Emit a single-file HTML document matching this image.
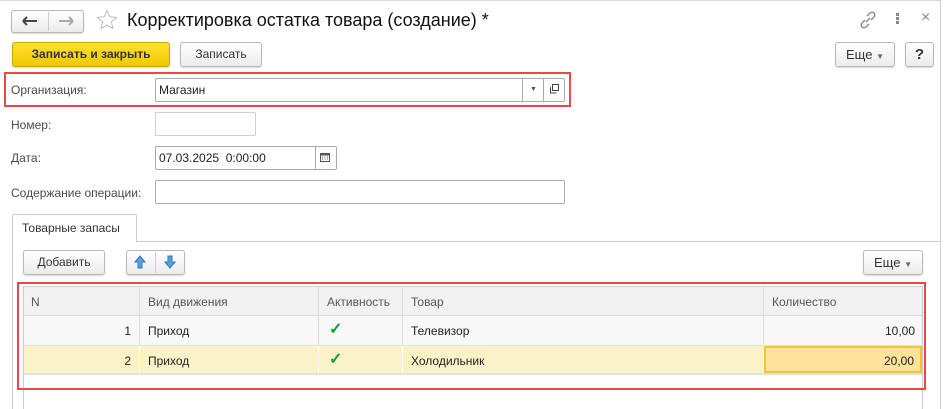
<!DOCTYPE html>
<html><head><meta charset="utf-8"><style>
*{box-sizing:border-box;margin:0;padding:0}
body{width:944px;height:409px;background:#fff;font-family:"Liberation Sans",sans-serif;font-size:12px;color:#333;position:relative;overflow:hidden}
.a{position:absolute}
.btn{position:absolute;border:1px solid #b8b8b8;border-radius:3px;background:linear-gradient(#fff,#ececec);box-shadow:0 1px 1px rgba(0,0,0,.15);text-align:center;color:#333;font-size:12px}
.inp{position:absolute;border:1px solid #a8a8a8;border-radius:2px;background:#fff}
.lbl{position:absolute;color:#4a4a4a;font-size:12px}
.red{position:absolute;border:2px solid #e84848}
.cell{position:absolute;top:0;bottom:0;border-right:1px solid #ddd;padding-top:8px;font-size:12px}
</style></head><body>
<div class="a" style="left:0;top:0;width:941px;height:409px;border-top:1px solid #d8d8d8;border-right:1px solid #d0d0d0"></div>
<!-- nav -->
<div class="btn" style="left:11px;top:10px;width:73px;height:23px;border-radius:3px"></div>
<div class="a" style="left:48px;top:12px;width:1px;height:19px;background:#ccc"></div>
<svg class="a" style="left:22px;top:16px" width="16" height="10"><path d="M1 5h14M1 5l4-4M1 5l4 4" stroke="#444" stroke-width="2" fill="none"/></svg>
<svg class="a" style="left:58px;top:16px" width="16" height="10"><path d="M1 5h14M15 5l-4-4M15 5l-4 4" stroke="#aaa" stroke-width="2" fill="none"/></svg>
<svg class="a" style="left:96px;top:9px" width="22" height="22"><path d="M11 1.5l2.8 6.3 6.7.6-5.1 4.5 1.5 6.6L11 16l-5.9 3.5 1.5-6.6L1.5 8.4l6.7-.6z" fill="none" stroke="#bbb"/></svg>
<div class="a" style="left:127px;top:10px;font-size:18px;color:#111">Корректировка остатка товара (создание) *</div>
<svg class="a" style="left:858px;top:10px" width="20" height="20" viewBox="0 0 20 20"><g fill="none" stroke="#888" stroke-width="1.4"><path d="M9 6l3-3a2.5 2.5 0 0 1 4 4l-3 3"/><path d="M11 14l-3 3a2.5 2.5 0 0 1-4-4l3-3"/><path d="M8 12l4-4"/></g></svg>
<div class="a" style="left:896px;top:13px;width:3px;height:3px;background:#888;box-shadow:0 4px #888,0 8px #888"></div>
<div class="a" style="left:921px;top:9px;font-size:16px;color:#888">×</div>
<!-- toolbar -->
<div class="btn" style="left:12px;top:42px;width:158px;height:25px;background:linear-gradient(#ffe033,#f0c800);border-color:#c9a800;font-weight:bold;line-height:23px;color:#333">Записать и закрыть</div>
<div class="btn" style="left:180px;top:42px;width:82px;height:25px;line-height:23px">Записать</div>
<div class="btn" style="left:835px;top:42px;width:60px;height:25px;line-height:23px;font-size:13px">Еще <span style="font-size:8px;color:#666">▼</span></div>
<div class="btn" style="left:905px;top:42px;width:29px;height:25px;line-height:23px;font-size:15px;font-weight:bold">?</div>
<!-- org -->
<div class="red" style="left:4px;top:72px;width:567px;height:35px"></div>
<div class="lbl" style="left:11px;top:83px">Организация:</div>
<div class="inp" style="left:155px;top:78px;width:410px;height:24px"></div>
<div class="a" style="left:159px;top:83px;color:#222">Магазин</div>
<div class="a" style="left:522px;top:79px;width:1px;height:22px;background:#aaa"></div>
<div class="a" style="left:543px;top:79px;width:1px;height:22px;background:#aaa"></div>
<div class="a" style="left:530px;top:86px;font-size:7px;color:#555">▼</div>
<svg class="a" style="left:549px;top:84px" width="10" height="10"><rect x="3.5" y="0.5" width="6" height="6" fill="none" stroke="#444"/><path d="M1.5 3v6h6" fill="none" stroke="#444"/></svg>
<div class="lbl" style="left:11px;top:118px">Номер:</div>
<div class="inp" style="left:155px;top:112px;width:101px;height:24px;border-color:#d0d0d0"></div>
<div class="lbl" style="left:11px;top:151px">Дата:</div>
<div class="inp" style="left:155px;top:146px;width:182px;height:24px"></div>
<div class="a" style="left:159px;top:151px;color:#222">07.03.2025 &nbsp;0:00:00</div>
<div class="a" style="left:315px;top:147px;width:1px;height:22px;background:#aaa"></div>
<svg class="a" style="left:320px;top:152px" width="11" height="11"><rect x="0.5" y="1.5" width="9" height="8" fill="none" stroke="#555"/><rect x="0.5" y="1.5" width="9" height="2" fill="#555"/><path d="M2 5h1M4.5 5h1M7 5h1M2 7h1M4.5 7h1M7 7h1" stroke="#555"/></svg>
<div class="lbl" style="left:11px;top:186px">Содержание операции:</div>
<div class="inp" style="left:155px;top:180px;width:410px;height:24px"></div>
<!-- tab -->
<div class="a" style="left:12px;top:214px;width:125px;height:28px;border:1px solid #ccc;border-bottom:none;background:#fff;border-radius:2px 2px 0 0"></div>
<div class="a" style="left:22px;top:221px;color:#333">Товарные запасы</div>
<div class="a" style="left:137px;top:241px;width:804px;height:1px;background:#ccc"></div>
<div class="a" style="left:12px;top:241px;width:1px;height:168px;background:#ccc"></div>
<div class="btn" style="left:23px;top:250px;width:82px;height:25px;line-height:23px">Добавить</div>
<div class="btn" style="left:126px;top:250px;width:59px;height:25px"></div>
<div class="a" style="left:155px;top:252px;width:1px;height:21px;background:#ccc"></div>
<svg class="a" style="left:134px;top:255px" width="12" height="14"><path d="M6 1L1 7h3v6h4V7h3z" fill="#5aa0e0" stroke="#2f78c0"/></svg>
<svg class="a" style="left:164px;top:255px" width="12" height="14"><path d="M6 13L1 7h3V1h4v6h3z" fill="#5aa0e0" stroke="#2f78c0"/></svg>
<div class="btn" style="left:863px;top:250px;width:60px;height:25px;line-height:23px;font-size:13px">Еще <span style="font-size:8px;color:#666">▼</span></div>
<!-- table -->
<div class="a" style="left:23px;top:286px;width:900px;height:123px;border-left:1px solid #ccc;border-right:1px solid #ccc;border-top:1px solid #ccc"></div>
<div class="red" style="left:17px;top:282px;width:909px;height:108px"></div>
<div class="a" style="left:24px;top:287px;width:898px;height:29px;background:#f2f2f2;border-bottom:1px solid #d8d8d8;color:#555">
<div class="cell" style="left:0;width:116px;padding-left:7px">N</div>
<div class="cell" style="left:116px;width:179px;padding-left:8px">Вид движения</div>
<div class="cell" style="left:295px;width:84px;padding-left:8px">Активность</div>
<div class="cell" style="left:379px;width:361px;padding-left:8px">Товар</div>
<div class="cell" style="left:740px;width:158px;padding-left:8px;border-right:none">Количество</div>
</div>
<div class="a" style="left:24px;top:316px;width:898px;height:30px;background:#f8f8f8;border-bottom:1px solid #e2e2e2;color:#222">
<div class="cell" style="left:0;width:116px;text-align:right;padding-right:8px">1</div>
<div class="cell" style="left:116px;width:179px;padding-left:8px">Приход</div>
<div class="cell" style="left:295px;width:84px;padding-left:10px;padding-top:3px;color:#1a9a3a;font-size:16px;font-weight:bold">✓</div>
<div class="cell" style="left:379px;width:361px;padding-left:8px">Телевизор</div>
<div class="cell" style="left:740px;width:158px;text-align:right;padding-right:7px;border-right:none">10,00</div>
</div>
<div class="a" style="left:24px;top:346px;width:898px;height:29px;background:#fcf2c8;border-bottom:2px solid #e2e2e2;color:#222">
<div class="cell" style="left:0;width:116px;text-align:right;padding-right:8px;border-color:#fff">2</div>
<div class="cell" style="left:116px;width:179px;padding-left:8px;border-color:#fff">Приход</div>
<div class="cell" style="left:295px;width:84px;padding-left:10px;padding-top:3px;color:#1a9a3a;font-size:16px;font-weight:bold;border-color:#fff">✓</div>
<div class="cell" style="left:379px;width:361px;padding-left:8px;border-color:#fff">Холодильник</div>
<div class="cell" style="left:740px;width:158px;text-align:right;padding-right:6px;background:#fde49a;border:2px solid #f2c530;padding-top:6px">20,00</div>
</div>
</body></html>
